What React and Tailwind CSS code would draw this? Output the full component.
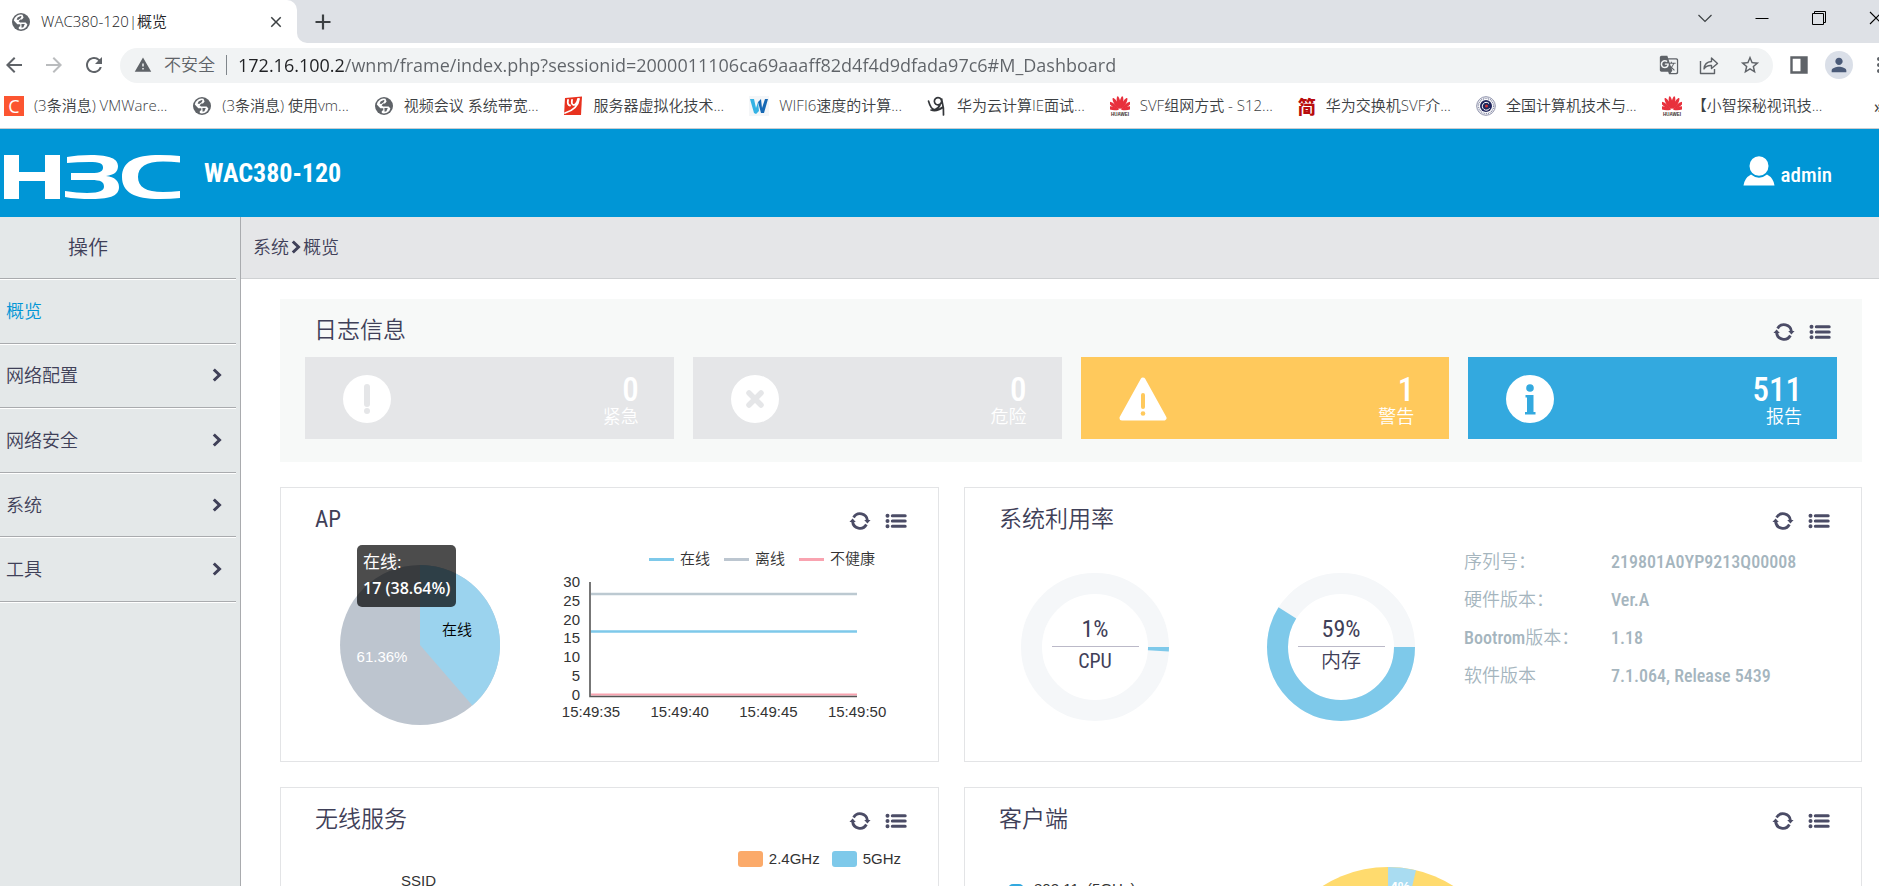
import {
  MdArrowBack,
  MdArrowForward,
  MdClose,
  MdGTranslate,
  MdMoreVert,
  MdPerson,
  MdRefresh,
  MdStarBorder,
  MdWarning,
} from "react-icons/md";

/* ---------- Browser chrome ---------- */

function Huawei() {
  const petals = [-78, -54, -31, -10, 10, 31, 54, 78];
  return (
    <svg viewBox="0 0 20 20" className="size-5" aria-hidden="true">
      {petals.map((a) => (
        <path
          key={a}
          d="M10 13 C7.600 8 8 3 9.400 0.500 Q10 -0.300 10.600 0.500 C12 3 12.400 8 10 13Z"
          fill="#e8303c"
          transform={`rotate(${a} 10 14)`}
        />
      ))}
      <rect x="0" y="15.500" width="20" height="4.500" fill="#fff" />
      <text x="10" y="19.800" fontSize="4.500" fontWeight="700" textAnchor="middle" fill="#3a2a2a" fontFamily="Liberation Sans, sans-serif">
        HUAWEI
      </text>
    </svg>
  );
}

function RedMark() {
  return (
    <svg viewBox="0 0 20 20" className="size-5" aria-hidden="true">
      <path d="M2 2 L19 0.500 L18 19 L1 19 Z" fill="#e8321f" />
      <path d="M5 4 Q4 9 7 9.500 M9 4 Q8 9 11 9 Q14 8 15 3 M16 3 Q15 13 2 17" stroke="#fff" strokeWidth="1.800" fill="none" strokeLinecap="round" />
    </svg>
  );
}

function BlueW() {
  return (
    <svg viewBox="0 0 20 20" className="size-5" aria-hidden="true">
      <rect width="20" height="20" fill="#f4f6f8" />
      <path d="M1 3 L5 3 L7 12 L9 6 L10 15 L7 18 L5 17 Z" fill="#34b2e4" />
      <path d="M9 6 L12 3 L13 12 L16 3 L19 3 L15 17 L12 17 Z" fill="#1668b4" />
    </svg>
  );
}

function InkMark() {
  return (
    <svg viewBox="0 0 20 20" className="size-5" aria-hidden="true">
      <path
        d="M1.500 5 Q4 14 8 13.500 Q11 13 13 9 M14.500 4.500 A3.600 3.600 0 1 0 13 8.200 Q15 7 14.800 3 M14.800 4 Q17 12 16.500 19 M4 14 Q10 16 16 11"
        stroke="#33363a"
        strokeWidth="1.700"
        fill="none"
        strokeLinecap="round"
      />
    </svg>
  );
}

function Seal() {
  return (
    <svg viewBox="0 0 20 20" className="size-5" aria-hidden="true">
      <circle cx="10" cy="10" r="9.300" fill="#fff" stroke="#8a8ea8" strokeWidth="1" />
      <circle cx="10" cy="10" r="7.600" fill="none" stroke="#8a8ea8" strokeWidth="1.400" strokeDasharray="1 0.800" />
      <circle cx="10" cy="10" r="6" fill="#20265c" />
      <path d="M13 7.500 A3.900 3.900 0 1 0 13.600 12.200" stroke="#fff" strokeWidth="1" fill="none" />
      <circle cx="10.500" cy="10" r="1.500" fill="#c33" />
    </svg>
  );
}

const globe = (
  <svg viewBox="0 0 20 20" className="size-5" aria-hidden="true">
    <circle cx="10" cy="10" r="9" fill="#5f6368" />
    <path
      d="M11.500 2.700 A7.400 7.400 0 0 0 2.800 8.600 L6.300 12.200 H9.300 V14.200 L7.800 15 V17 Q8.800 17.400 10 17.400 Q13.400 17.300 15.300 15 L16.400 12.600 L14.600 10.600 H9 L7.600 9.200 L9.400 7.600 H11 L12.600 5.600 Z"
      fill="#fff"
    />
    <path d="M9.600 4 L6.600 5.400 L5.600 7.600 L7.200 8 L9.600 6.200 L10.600 4.400 Z M10.400 12 H13.800 L12.400 15.200 L10.600 15.800 Z" fill="#5f6368" />
  </svg>
);

const bookmarks = [
  {
    label: "(3条消息) VMWare...",
    icon: <span className="grid size-5 place-items-center bg-[#fc5531] text-lg leading-5 font-normal text-white">C</span>,
  },
  { label: "(3条消息) 使用vm...", icon: globe },
  { label: "视频会议 系统带宽...", icon: globe },
  { label: "服务器虚拟化技术...", icon: <RedMark /> },
  { label: "WIFI6速度的计算...", icon: <BlueW /> },
  { label: "华为云计算IE面试...", icon: <InkMark /> },
  { label: "SVF组网方式 - S12...", icon: <Huawei /> },
  {
    label: "华为交换机SVF介...",
    icon: <span className="font-['Noto_Sans_CJK_SC',sans-serif] text-lg leading-5 font-black text-[#b80d0d]">简</span>,
  },
  { label: "全国计算机技术与...", icon: <Seal /> },
  { label: "【小智探秘视讯技...", icon: <Huawei /> },
];

function TabStrip() {
  return (
    <div className="flex h-[43px] bg-[#dee1e6]">
      <div className="flex w-[297px] items-center rounded-tr-[10px] bg-white pr-3 pl-[11px]">
        {globe}
        <span className="ml-2.5 flex-1 text-[15px] font-[350] text-[#202124]">WAC380-120|概览</span>
        <button type="button" aria-label="关闭标签页">
          <MdClose className="size-[18px] text-[#3c4043]" />
        </button>
      </div>
      <span className="size-2.5 self-end bg-white">
        <span className="block size-full rounded-bl-[10px] bg-[#dee1e6]" />
      </span>
      <button type="button" aria-label="新标签页" className="ml-1 grid w-6 place-items-center">
        <svg viewBox="0 0 16 16" className="size-4" aria-hidden="true">
          <path d="M8 0.500 V15.500 M0.500 8 H15.500" stroke="#3c4043" strokeWidth="2.200" />
        </svg>
      </button>
      <div className="-mr-[25px] ml-auto flex h-9 [&>button]:grid [&>button]:w-[57px] [&>button]:place-items-center">
        <button type="button" aria-label="搜索标签页">
          <svg viewBox="0 0 14 14" className="size-3.5" aria-hidden="true">
            <path d="M0.500 4 L7 10.500 L13.500 4" stroke="#3c4043" strokeWidth="1.200" fill="none" />
          </svg>
        </button>
        <button type="button" aria-label="最小化">
          <svg viewBox="0 0 14 14" className="size-3.5" aria-hidden="true">
            <path d="M0.500 7.500 H13.500" stroke="#000" />
          </svg>
        </button>
        <button type="button" aria-label="还原">
          <svg viewBox="0 0 14 14" className="size-3.5" aria-hidden="true">
            <path d="M0.500 2.500 H11.500 V13.500 H0.500 Z M2.500 2.500 V0.500 H13.500 V11.500 H11.500" stroke="#000" fill="none" />
          </svg>
        </button>
        <button type="button" aria-label="关闭">
          <svg viewBox="0 0 14 14" className="size-3.5" aria-hidden="true">
            <path d="M1 1 L13 13 M13 1 L1 13" stroke="#000" strokeWidth="1.100" />
          </svg>
        </button>
      </div>
    </div>
  );
}

function Toolbar() {
  return (
    <div className="-mr-3.5 flex h-11 items-center gap-3 text-[#5f6368] [&>button]:grid [&>button]:size-7 [&>button]:place-items-center">
      <button type="button" aria-label="后退">
        <MdArrowBack className="size-6" />
      </button>
      <button type="button" aria-label="前进">
        <MdArrowForward className="size-6 text-[#babcbe]" />
      </button>
      <button type="button" aria-label="重新加载">
        <MdRefresh className="size-6" />
      </button>
      <div className="flex h-[35px] flex-1 items-center rounded-full bg-[#f1f3f4] pr-3 pl-3.5">
        <MdWarning className="size-[18px]" />
        <label htmlFor="address" className="ml-3 text-[17px] font-[350]">
          不安全
        </label>
        <span className="mx-[11px] h-5 w-px bg-[#80868b]" />
        <input
          id="address"
          type="text"
          className="min-w-0 flex-1 bg-[linear-gradient(90deg,#202124_107px,#5f6368_107px)] bg-clip-text text-lg text-transparent outline-none"
          defaultValue="172.16.100.2/wnm/frame/index.php?sessionid=2000011106ca69aaaff82d4f4d9dfada97c6#M_Dashboard"
        />
        <div className="flex gap-5">
          <button type="button" aria-label="翻译">
            <MdGTranslate className="size-5" />
          </button>
          <button type="button" aria-label="分享">
            <svg viewBox="0 0 20 20" className="size-5" aria-hidden="true">
              <path
                d="M1.500 6 V18.500 H15.500 V14 M5 14 Q5.500 7 12.500 6.500 V3 L18.500 8.500 L12.500 13.500 V10.500 Q7.500 10 5 14 Z"
                stroke="currentColor"
                strokeWidth="1.400"
                fill="none"
                strokeLinejoin="round"
              />
            </svg>
          </button>
          <button type="button" aria-label="收藏">
            <MdStarBorder className="size-[22px]" />
          </button>
        </div>
      </div>
      <button type="button" aria-label="侧边栏">
        <svg viewBox="0 0 18 18" className="size-[18px]" aria-hidden="true">
          <path d="M1.500 1.500 H16.500 V16.500 H1.500 Z" stroke="currentColor" strokeWidth="2.400" fill="none" />
          <rect x="10.500" y="2" width="6" height="14" fill="currentColor" />
        </svg>
      </button>
      <button type="button" aria-label="用户" className="rounded-full bg-[#dadfe8] text-[#4a5a78]">
        <MdPerson className="size-[22px]" />
      </button>
      <button type="button" aria-label="更多">
        <MdMoreVert className="size-6" />
      </button>
    </div>
  );
}

function Bookmarks() {
  return (
    <nav className="flex h-[42px] items-center gap-[25px] border-b border-[#c9ccd0] bg-white pb-1 pl-1 text-[#3c4043]">
      {bookmarks.map((b) => (
        <a key={b.label} href="#bookmark" className="flex items-center gap-2.5 text-[15px] font-[350] whitespace-nowrap">
          {b.icon}
          {b.label}
        </a>
      ))}
      <span className="-mr-1 ml-auto text-lg">»</span>
    </nav>
  );
}

/* ---------- Device console ---------- */

function Chevron() {
  return (
    <svg viewBox="0 0 10 14" className="h-3.5 w-2.5" aria-hidden="true">
      <path d="M1.800 1.500 L7.500 7 L1.800 12.500" stroke="currentColor" strokeWidth="3" fill="none" />
    </svg>
  );
}

function Logo() {
  return (
    <svg viewBox="0 0 178 46" className="h-[46px] w-[178px]" role="img" aria-label="H3C">
      <g fill="#fff">
        <rect x="1" y="1" width="15" height="44" />
        <rect x="42" y="1" width="15" height="44" />
        <rect x="16" y="18" width="26" height="9" />
        <path d="M64 3 Q74 1 88 1 C107 1 115 5 115 12 C115 18 111 21 103 22 C112 23 116 27 116 33 C116 41 109 45 89 45 Q73 45 62 43 V37 Q74 39 84 39 C98 39 101 36 101 32.500 C101 28 98 26 88 26 H68 V19 H88 C98 19 100 17 100 13.500 C100 9.500 97 8 86 8 Q74 8 64 9 Z" />
        <path d="M177 2 V8.500 Q168 7.500 160 7.500 C143 7.500 135 13 135 23 C135 33 143 38 160 38 Q168 38 177 37 V44 Q168 45 157 45 C131 45 119 38 119 23 C119 8 131 1 157 1 Q168 1 177 2 Z" />
      </g>
    </svg>
  );
}

function Header() {
  return (
    <header className="flex h-[88px] items-center bg-[#0096d6] pr-[47px] pl-[3px] font-['Roboto_Condensed',Roboto,sans-serif] text-white">
      <div className="mt-2">
        <Logo />
      </div>
      <h1 className="ml-[23px] text-[26px] leading-8 font-bold">WAC380-120</h1>
      <button type="button" className="ml-auto flex items-center gap-1.5 text-[21px] leading-7 font-medium">
        <svg viewBox="0 0 32 30" className="-mt-1 h-[30px] w-8" aria-hidden="true">
          <ellipse cx="16" cy="10" rx="9.500" ry="9.800" fill="#fff" />
          <path d="M0.500 29.500 Q1.500 22 8 18.500 Q16 25 24 18.500 Q30.500 22 31.500 29.500 Z" fill="#fff" />
        </svg>
        <span className="pt-1">admin</span>
      </button>
    </header>
  );
}

const menu = ["概览", "网络配置", "网络安全", "系统", "工具"];

function Sidebar() {
  return (
    <nav className="w-[241px] shrink-0 border-r border-[#a9abae] bg-[#e4e8e9] pr-1 text-lg font-[350] text-[#3f4058]">
      <h2 className="flex h-[62px] items-center justify-center border-b border-[#a9abae] pr-[60px] text-xl shadow-[0_1px_0_#fff]">
        操作
      </h2>
      <ul className="grid h-[323px] grid-rows-5">
        {menu.map((m, i) => (
          <li key={m} className="border-b border-[#a9abae] shadow-[0_1px_0_#fff]">
            <a
              href="#menu"
              className={
                i === 0
                  ? "flex h-full items-center pl-1.5 text-[#0096d6]"
                  : "flex h-full items-center justify-between pr-3.5 pl-1.5"
              }
            >
              {m}
              {i > 0 && <Chevron />}
            </a>
          </li>
        ))}
      </ul>
    </nav>
  );
}

function Title({ children, latin = false }) {
  return (
    <div className="flex h-[58px] items-center justify-between pt-1.5 pr-[31px] pl-[34px] text-[#3f4058]">
      <h2
        className={`font-['Roboto_Condensed','Noto_Sans_CJK_SC',sans-serif] text-[23px] ${
          latin ? "font-normal" : "font-[350]"
        }`}
      >
        {children}
      </h2>
      <div className="flex gap-3.5 pt-0.5 text-[#4b4c66]">
        <button type="button" aria-label="刷新">
          <svg viewBox="0 0 22 20" className="h-5 w-[22px]" aria-hidden="true">
            <path d="M4.600 6.500 A7.400 7.400 0 0 1 18.400 9.500 M17.400 13.500 A7.400 7.400 0 0 1 3.600 10.500" stroke="currentColor" strokeWidth="2.800" fill="none" />
            <path d="M15.200 9 H21.600 L18.400 12.600 Z M0.400 11 H6.800 L3.600 7.400 Z" fill="currentColor" />
          </svg>
        </button>
        <button type="button" aria-label="详情">
          <svg viewBox="0 0 22 20" className="h-5 w-[22px]" aria-hidden="true">
            <path d="M2.500 4.800 h0.010 M2.500 10 h0.010 M2.500 15.200 h0.010" stroke="currentColor" strokeWidth="4" strokeLinecap="round" />
            <path d="M7.300 4.800 H20.200 M7.300 10 H20.200 M7.300 15.200 H20.200" stroke="currentColor" strokeWidth="3" strokeLinecap="round" />
          </svg>
        </button>
      </div>
    </div>
  );
}

function Card({ title, latin, children }) {
  return (
    <section className="border border-[#e3e4e6] bg-white">
      <Title latin={latin}>{title}</Title>
      {children}
    </section>
  );
}

const tiles = [
  {
    n: 0,
    label: "紧急",
    cls: "bg-[#e5e6e8]",
    icon: (
      <>
        <circle cx="24" cy="24" r="24" fill="#fff" />
        <path d="M24 12 V29" stroke="#e5e6e8" strokeWidth="6" strokeLinecap="round" />
        <circle cx="24" cy="36" r="3" fill="#e5e6e8" />
      </>
    ),
  },
  {
    n: 0,
    label: "危险",
    cls: "bg-[#e5e6e8]",
    icon: (
      <>
        <circle cx="24" cy="24" r="24" fill="#fff" />
        <path d="M18 18 L30 30 M30 18 L18 30" stroke="#e5e6e8" strokeWidth="5.500" strokeLinecap="round" />
      </>
    ),
  },
  {
    n: 1,
    label: "警告",
    cls: "bg-[#ffc95c]",
    icon: (
      <>
        <path d="M24 5 L45 43 H3 Z" fill="#fff" stroke="#fff" strokeWidth="5" strokeLinejoin="round" />
        <path d="M24 20 V32" stroke="#ffc95c" strokeWidth="4" strokeLinecap="round" />
        <circle cx="24" cy="38.500" r="2.300" fill="#ffc95c" />
      </>
    ),
  },
  {
    n: 511,
    label: "报告",
    cls: "bg-[#33a9df]",
    icon: (
      <>
        <circle cx="24" cy="24" r="24" fill="#fff" />
        <circle cx="24" cy="13" r="3.800" fill="#33a9df" />
        <path d="M19.500 20 H27.500 V37 H29.500 V39.500 H19 V37 H21 V22.500 H19.500 Z" fill="#33a9df" />
      </>
    ),
  },
];

function LogPanel() {
  return (
    <section className="bg-[#f7f9f8] pb-[23px]">
      <Title>日志信息</Title>
      <div className="grid grid-cols-4 gap-[19px] px-[25px]">
        {tiles.map((t) => (
          <a
            key={t.label}
            href="#log"
            className={`flex h-[82px] items-center justify-between pr-[35px] pl-[38px] text-white ${t.cls}`}
          >
            <svg viewBox="0 0 48 48" className="mt-0.5 size-12" aria-hidden="true">
              {t.icon}
            </svg>
            <span className="flex flex-col items-end pt-1.5">
              <span className="font-['Roboto_Condensed',Roboto,sans-serif] text-[33px] leading-[30px] font-medium">{t.n}</span>
              <span className="text-lg leading-[22px] font-[350]">{t.label}</span>
            </span>
          </a>
        ))}
      </div>
    </section>
  );
}

const lines = [
  { label: "在线", bg: "bg-[#7ec9ea]" },
  { label: "离线", bg: "bg-[#bcc6d0]" },
  { label: "不健康", bg: "bg-[#f9a3b0]" },
];

function ApCard() {
  return (
    <Card title="AP" latin>
      <div className="flex justify-between pr-[38px] pb-9 pl-[59px] font-['Liberation_Sans','Noto_Sans_CJK_SC',sans-serif] text-[15px]">
        <div className="relative mt-[19px]">
          <svg viewBox="0 0 160 160" className="size-40" role="img" aria-label="AP">
            <circle cx="80" cy="80" r="80" fill="#bdc5cf" />
            <path d="M80 80 V0 A80 80 0 0 1 132.400 140.500 Z" fill="#9bd3ee" />
            <text x="117" y="70" textAnchor="middle" fontWeight="350" fill="#000">
              在线
            </text>
            <text x="42" y="97" textAnchor="middle" fill="#fff">
              61.36%
            </text>
          </svg>
          <div className="absolute -top-5 left-[17px] rounded-[5px] bg-black/70 px-1.5 pt-1 pb-1.5 font-['Open_Sans','Noto_Sans_CJK_SC',sans-serif] text-[17px] leading-[26px] whitespace-nowrap text-white">
            在线:
            <br />
            <span className="text-base leading-[26px] font-semibold">17 (38.64%)</span>
          </div>
        </div>
        <div>
          <ul className="flex h-[26px] items-center justify-end gap-3.5 pr-[25px] text-[#333]">
            {lines.map((l) => (
              <li key={l.label} className="flex items-center gap-1.5 font-[350]">
                <span className={`h-[3px] w-[25px] ${l.bg}`} />
                {l.label}
              </li>
            ))}
          </ul>
          <svg viewBox="0 0 350 150" className="h-[150px] w-[350px]" role="img" aria-label="AP 趋势" fill="#333">
            {[30, 25, 20, 15, 10, 5, 0].map((v) => (
              <text key={v} x="30" y={128 - v * 3.77} textAnchor="end">
                {v}
              </text>
            ))}
            {["15:49:35", "15:49:40", "15:49:45", "15:49:50"].map((t, i) => (
              <text key={t} x={41 + i * 88.7} y="145" textAnchor="middle">
                {t}
              </text>
            ))}
            <path d="M41 22 H307" stroke="#bcc9d1" strokeWidth="2.500" />
            <path d="M41 59.500 H307" stroke="#7ec9ea" strokeWidth="2.500" />
            <path d="M41 122.500 H307" stroke="#f9a3b0" strokeWidth="2" />
            <path d="M40 10 V124.500 H307" stroke="#555" strokeWidth="1.600" fill="none" />
          </svg>
        </div>
      </div>
    </Card>
  );
}

function Donut({ value, label, latin = false }) {
  return (
    <div className="grid place-items-center">
      <svg viewBox="0 0 148 148" className="col-start-1 row-start-1 size-[148px]" aria-hidden="true">
        <circle cx="74" cy="74" r="63.500" fill="none" stroke="#f5f7f9" strokeWidth="21" />
        <circle
          cx="74"
          cy="74"
          r="63.500"
          fill="none"
          stroke="#7ec9ea"
          strokeWidth="21"
          pathLength="100"
          strokeDasharray={`${value} 100`}
        />
      </svg>
      <div className="col-start-1 row-start-1 w-[87px] text-center font-['Roboto_Condensed','Noto_Sans_CJK_SC',sans-serif] text-[#3f4058]">
        <p className="h-[30px] border-b border-[#bbb9c8] text-2xl leading-6">{value}%</p>
        <p className={`h-[30px] pt-0.5 text-xl leading-6 ${latin ? "font-normal" : "font-[350]"}`}>{label}</p>
      </div>
    </div>
  );
}

const info = [
  ["", "序列号：", "219801A0YP9213Q00008"],
  ["", "硬件版本：", "Ver.A"],
  ["Bootrom", "版本：", "1.18"],
  ["", "软件版本", "7.1.064, Release 5439"],
];

function SystemCard() {
  return (
    <Card title="系统利用率">
      <div className="flex items-start pl-14">
        <div className="mt-[27px] flex gap-[98px]">
          <Donut value={1} label="CPU" latin />
          <Donut value={59} label="内存" />
        </div>
        <dl className="ml-[49px] grid grid-cols-[147px_auto] gap-y-1.5 font-['Roboto_Condensed','Noto_Sans_CJK_SC',sans-serif] text-lg leading-8 whitespace-nowrap text-[#a5b5be]">
          {info.map(([latin, k, v]) => (
            <div key={v} className="contents">
              <dt className="font-[350]">
                {latin && <span className="font-medium">{latin}</span>}
                {k}
              </dt>
              <dd className="font-medium">{v}</dd>
            </div>
          ))}
        </dl>
      </div>
    </Card>
  );
}

function WirelessCard() {
  return (
    <Card title="无线服务">
      <div className="h-[214px] pr-[37px] pl-[120px] font-['Liberation_Sans',sans-serif] text-[15px] text-[#333]">
        <ul className="flex h-[26px] items-center justify-end gap-3">
          <li className="flex items-center gap-1.5">
            <span className="h-4 w-[25px] rounded-[3px] bg-[#fbaa6a]" />
            2.4GHz
          </li>
          <li className="flex items-center gap-1.5">
            <span className="h-4 w-[25px] rounded-[3px] bg-[#7ec9ea]" />
            5GHz
          </li>
        </ul>
        <p className="leading-[18px]">SSID</p>
      </div>
    </Card>
  );
}

function ClientCard() {
  return (
    <Card title="客户端">
      <div className="flex h-[300px] items-start pl-[43px] font-['Liberation_Sans',sans-serif] text-[15px] text-[#333]">
        <p className="mt-[34px] flex w-[258px] items-center gap-2.5 leading-[18px]">
          <span className="h-2.5 w-4 rounded-full bg-[#33a9df]" />
          802.11a(5GHz)
        </p>
        <svg viewBox="0 0 244 244" className="mt-[21px] size-[244px]" role="img" aria-label="客户端">
          <circle cx="122" cy="122" r="122" fill="#ffdb6e" />
          <path d="M122 122 V0 A122 122 0 0 1 150 3.300 Z" fill="#a9dcf1" />
          <text x="134" y="25" textAnchor="middle" fontSize="14" fontWeight="700" fill="#fff">
            4%
          </text>
        </svg>
      </div>
    </Card>
  );
}

export default function App() {
  return (
    <div className="flex h-screen flex-col overflow-hidden bg-white font-['Open_Sans','Noto_Sans_CJK_SC',sans-serif]">
      <div className="shrink-0">
        <TabStrip />
        <Toolbar />
        <Bookmarks />
        <Header />
      </div>
      <div className="flex min-h-0 flex-1">
        <Sidebar />
        <main className="min-w-0 flex-1">
          <div className="flex h-[62px] items-center gap-0.5 border-b border-[#cfd1d3] bg-[#e5e6e8] pb-0.5 pl-3 text-lg font-[350] text-[#3f4058]">
            <a href="#system">系统</a>
            <Chevron />
            <span>概览</span>
          </div>
          <div className="flex flex-col gap-[25px] pt-5 pr-[17px] pl-[39px]">
            <LogPanel />
            <div className="grid grid-cols-[659fr_898fr] gap-[25px]">
              <ApCard />
              <SystemCard />
              <WirelessCard />
              <ClientCard />
            </div>
          </div>
        </main>
      </div>
    </div>
  );
}
